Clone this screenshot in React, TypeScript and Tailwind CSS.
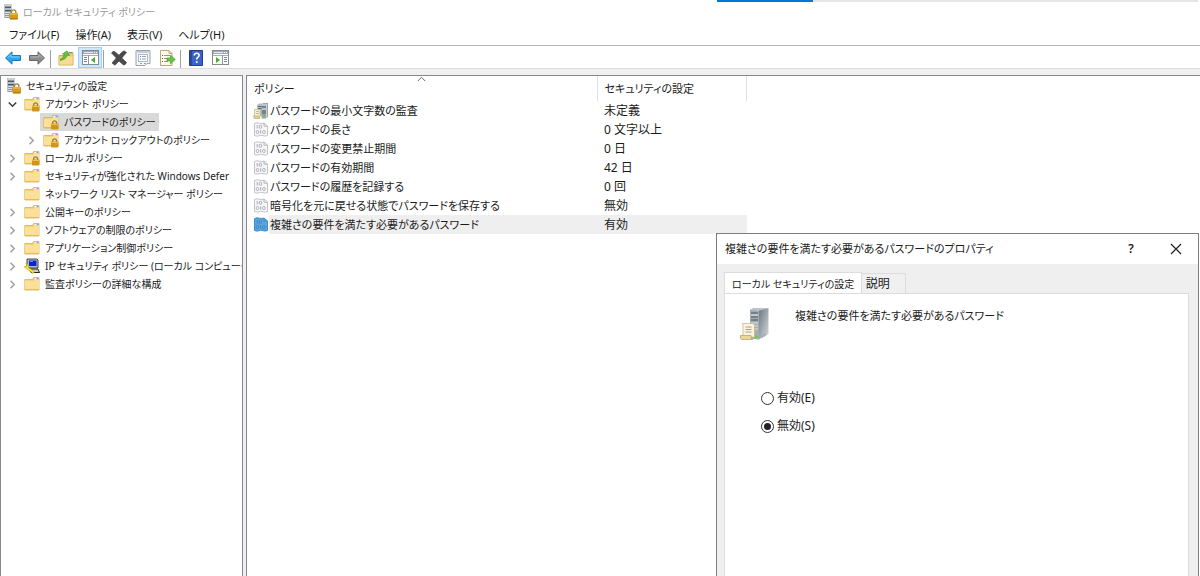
import { useState } from "react";
import type { ReactNode } from "react";

function ServerLockIcon() {
  return (
    <svg width="16" height="16" viewBox="0 0 16 16" className="shrink-0" aria-hidden="true">
      <path d="M1 0h7.500v14H1z" fill="#8d9aa3" />
      <path d="M1 0h7.500v2H1z" fill="#c9d1d6" />
      <path d="M1 0h1v14H1z" fill="#b9c3c9" />
      <path d="M2 3.500h6M2 6.500h6" stroke="#4c5a64" />
      <path d="M2 5h6M2 8.500h5M2 10.500h4M2 12.500h4" stroke="#d8dfe3" />
      <path d="M8.500 9.500V8a2.200 2.200 0 0 1 4.400 0v1.500" fill="none" stroke="#a08343" strokeWidth="1.300" />
      <rect x="6.500" y="9" width="8.500" height="6.500" rx="0.800" fill="#d79a1e" />
      <path d="M7 10h7.500" stroke="#f2c75b" />
      <path d="M7 14.800h7.500" stroke="#a86e0c" />
    </svg>
  );
}

function FolderIcon({ locked = false }: { locked?: boolean }) {
  return (
    <svg width="16" height="16" viewBox="0 0 16 16" className="shrink-0" aria-hidden="true">
      <path d="M.8 3.500h7.700l1-2h5.500v12.500H.8z" fill="#edc667" stroke="#dcb154" strokeWidth="0.800" />
      <path d="M10.500 2.700h4" stroke="#fff" strokeWidth="1.400" />
      <path d="M12.500 2.700h2" stroke="#5aa9dc" strokeWidth="1.400" />
      <path d="M1 4.500h8.500l1-1h4.500v10H1z" fill="#fbe09a" />
      <path d="M1 13.500h14" stroke="#dfb658" strokeWidth="0.800" />
      {locked && (
        <>
          <path d="M9.700 10V8.300a2 2 0 0 1 3.800 0V10" fill="none" stroke="#8f7643" strokeWidth="1.300" />
          <rect x="8" y="9.500" width="7.500" height="6" rx="0.800" fill="#d2951b" />
          <path d="M8.500 10.500h6.500" stroke="#efbf4f" />
        </>
      )}
    </svg>
  );
}

function IpSecurityIcon() {
  return (
    <svg width="16" height="16" viewBox="0 0 16 16" className="shrink-0" aria-hidden="true">
      <path d="M3 1h10l1 1v8H4L3 9z" fill="#b9bec4" stroke="#222" strokeWidth="0.800" />
      <path d="M5 2.500h7.500V8H5z" fill="#0a25c4" />
      <path d="M6 3.500h3" stroke="#5d8bff" />
      <path d="M5 11h9l1.500 3.500H7z" fill="#c8ccd0" stroke="#111" strokeWidth="0.900" />
      <path d="M1.800 5.500l2.600 1.300v2.700l6 4.200-1.200 1.700-6-4.300L.7 9.700V8l2 .8 .3-1.500z" fill="#ffe82c" stroke="#b19a00" strokeWidth="0.500" />
    </svg>
  );
}

function PolicyIcon({ selected = false }: { selected?: boolean }) {
  return (
    <svg width="14" height="15" viewBox="0 0 14 15" className="shrink-0" aria-hidden="true">
      <path
        d="M.5 1.500Q3 .3 5.500 1.200T10 1l3.500 3v9.500q-2 1-4.500.2t-5 .3q-2 .3-3.500-.5z"
        fill={selected ? "#5aa5dd" : "#f7f7f9"}
        stroke={selected ? "#3d8fce" : "#c2c2ca"}
      />
      <path d="M10 1v3.200h3.500" fill="none" stroke={selected ? "#3d8fce" : "#b4b4bd"} />
      <g fill="none" stroke={selected ? "#3c86c4" : "#a3a3b0"} strokeWidth="0.900">
        <path d="M3.200 3v3.500" />
        <rect x="5.200" y="3.300" width="2.400" height="3" rx="1" />
        <rect x="2.300" y="8.500" width="2.400" height="3" rx="1" />
        <path d="M6.700 8.200v3.500" />
        <rect x="8.700" y="8.500" width="2.400" height="3" rx="1" />
      </g>
    </svg>
  );
}

function AuditIcon() {
  return (
    <svg width="16" height="16" viewBox="0 0 16 16" className="shrink-0" aria-hidden="true">
      <path d="M4 2l2-1.500h4.500V13H4z" fill="#b8c0c4" />
      <path d="M5 3.500h4M5 5.500h4" stroke="#5c6972" />
      <path d="M8.500 1.500L10.500 0H15v14l-2 1.500H8.500z" fill="#9aa6ad" />
      <path d="M9 2h4.500M9 6h4.500" stroke="#dfe5e8" />
      <path d="M9 4h4.500M9 8h4.500M9 10h4.500" stroke="#53616a" />
      <path d="M13.500 1v14" stroke="#c9d0d4" />
      <circle cx="11.500" cy="13" r="1" fill="#62c92f" />
      <path d="M1.500 6.500h5.500v8H1.500z" fill="#faefd0" stroke="#c8b88b" strokeWidth="0.800" />
      <path d="M3 8.500h3M3 10.500h3" stroke="#b7aa90" strokeWidth="0.800" />
      <path d="M.5 13h5.500l.8 2.500H1z" fill="#e8cf90" stroke="#bba66c" strokeWidth="0.600" />
    </svg>
  );
}

function ServerScrollIcon() {
  return (
    <svg viewBox="0 0 32 36" className="h-9 w-8 shrink-0" aria-hidden="true">
      <defs>
        <linearGradient id="server-side" x1="0" x2="1" y1="0" y2="1">
          <stop offset="0" stopColor="#6d7880" />
          <stop offset="1" stopColor="#d5dadd" />
        </linearGradient>
      </defs>
      <path d="M11 3.500l3-1.500h15.500L20 4.500z" fill="#bcc4c9" />
      <path d="M11 3.500l9 1v29l-9-1z" fill="#a3adb4" />
      <path d="M20 4.500L29.500 2v26L20 33.500z" fill="url(#server-side)" />
      <path d="M12 7h7M12 11h7M12 14h7" stroke="#46545e" strokeWidth="1.200" />
      <path d="M12 9h7M12 17h7M12 20h7M12 23h7" stroke="#dce2e6" strokeWidth="1.200" />
      <circle cx="17.500" cy="30.500" r="1.500" fill="#62d62d" />
      <path d="M23 31l4-2.500" stroke="#9ba5ab" strokeDasharray="1 1" strokeWidth="2" />
      <path d="M3.500 17.500h10q2 0 2 2V31H4V20z" fill="#fbf3da" stroke="#c8b88b" strokeWidth="0.800" />
      <path d="M6.500 21h6M6.500 23.500h6M6.500 26h6" stroke="#a79f99" />
      <path d="M1.500 29.500h10.500v2q.5 2 2 2H2.500q-2-.5-1-4z" fill="#ecd69b" stroke="#bba66c" strokeWidth="0.800" />
    </svg>
  );
}

function ArrowIcon({ forward = false }: { forward?: boolean }) {
  return (
    <svg width="18" height="16" viewBox="0 0 18 16" aria-hidden="true">
      {forward ? (
        <>
          <path d="M16.500 8L10 1.800v3.700H1.500v5H10v3.700z" fill="#8c8c8c" stroke="#666" strokeLinejoin="round" />
          <path d="M2.500 7h8.500V4.500L14.500 8" fill="none" stroke="#b5b5b5" />
        </>
      ) : (
        <>
          <path d="M1.500 8L8 1.800v3.700h8.500v5H8v3.700z" fill="#2aa5ee" stroke="#1779bd" strokeLinejoin="round" />
          <path d="M15.500 7H7V4.500L3.500 8" fill="none" stroke="#83d2ff" />
        </>
      )}
    </svg>
  );
}

function FolderUpIcon() {
  return (
    <svg width="16" height="16" viewBox="0 0 16 16" aria-hidden="true">
      <path d="M1 5.500h6L9 3h6v12H1z" fill="#f0cb74" stroke="#d6ad55" />
      <path d="M1.500 14.500V7.500L8 6.500h6.500v8z" fill="#f8dc94" />
      <path d="M11 2.500h3.500" stroke="#4b91c4" />
      <path d="M2.500 9Q5 8.500 6.500 4.500L4.500 4 9 1l2.500 4.500-2-.5Q8 9.500 2.500 10.500z" fill="#63c53d" stroke="#3c9a24" strokeWidth="0.700" />
    </svg>
  );
}

function PaneIcon({ direction }: { direction: "left" | "right" }) {
  return (
    <svg width="17" height="15" viewBox="0 0 17 15" aria-hidden="true">
      <rect x=".5" y=".5" width="16" height="14" fill="#fff" stroke="#858b91" />
      <path d="M1 1h15v3H1z" fill="#a1a8ae" />
      <path d="M2 2.500h9" stroke="#e9edf0" />
      <path d="M12 2.500h1M14 2.500h1" stroke="#fff" />
      <path d="M1 5.500h15" stroke="#a9aeb2" />
      {direction === "left" ? (
        <>
          <path d="M6.500 5v10" stroke="#90979d" />
          <path d="M2 7.500h3M2 9.500h3M2 11.500h3" stroke="#698ba8" />
          <path d="M13 7v6L9 10z" fill="#48ac2a" />
        </>
      ) : (
        <>
          <path d="M10.500 5v10" stroke="#90979d" />
          <path d="M12 7.500h3M12 9.500h3M12 11.500h3" stroke="#698ba8" />
          <path d="M4 7v6l4-3z" fill="#48ac2a" />
        </>
      )}
    </svg>
  );
}

function DeleteIcon() {
  return (
    <svg width="16" height="16" viewBox="0 0 16 16" aria-hidden="true">
      <path d="M.5 3Q2 .8 3.500 1.500L8 5.200Q10.500 2 13 .8l2.500 1.700L10.800 8l4.700 4.500q-1 2.500-3 2.500L8 11l-4 4.200L1 13l4.300-5z" fill="#4b4b4b" stroke="#333" strokeWidth="0.600" />
    </svg>
  );
}

function PropertiesIcon() {
  return (
    <svg width="16" height="16" viewBox="0 0 16 16" aria-hidden="true">
      <path d="M1 .5h14v13h-3l-2 2H1z" fill="#f5f7fa" stroke="#9aa2ab" />
      <path d="M2 2h12" stroke="#b3bfca" strokeWidth="1.500" />
      <rect x="3.500" y="4.500" width="9" height="7" fill="#fff" stroke="#aeb8c2" />
      <path d="M5 6.500h1M5 9h1" stroke="#3a91d1" />
      <path d="M7 6.500h4M7 9h4" stroke="#98a3ad" />
      <path d="M5 13.500h2M9 13.500h2" stroke="#51b8e8" />
    </svg>
  );
}

function ExportIcon() {
  return (
    <svg width="17" height="16" viewBox="0 0 17 16" aria-hidden="true">
      <path d="M1.500 .5H10l3 3v12H1.500z" fill="#fffbe9" stroke="#b9a878" />
      <path d="M10 .5v3h3" fill="none" stroke="#b9a878" />
      <path d="M3 5.500h1M3 8.500h1M3 11.500h1" stroke="#555" />
      <path d="M5 5.500h6M5 8.500h4M5 11.500h4" stroke="#98909c" />
      <path d="M8 8h3.500V5.300L16.300 9.500l-4.800 4.200V11H8z" fill="#69c443" stroke="#48a027" strokeWidth="0.700" />
    </svg>
  );
}

function HelpIcon() {
  return (
    <svg width="14" height="16" viewBox="0 0 14 16" aria-hidden="true">
      <path d="M.5.5h13v15H.5z" fill="#3b63c6" stroke="#213c91" />
      <path d="M1 1h2v14H1z" fill="#2a489f" />
      <path d="M5.300 5.500Q5.300 3.300 7.700 3.300t2.400 2q0 1.300-1.300 2.100T7.700 9.500" fill="none" stroke="#fff" strokeWidth="1.600" />
      <path d="M6.900 11.200h1.700v1.700H6.900z" fill="#fff" />
    </svg>
  );
}

function Chevron({ open }: { open?: boolean }) {
  return (
    <svg width="9" height="9" viewBox="0 0 9 9" className="shrink-0" aria-hidden="true">
      {open === true && <path d="M.8 2.500l3.700 3.700 3.700-3.700" fill="none" stroke="#404040" strokeWidth="1.600" />}
      {open === false && <path d="M2.500 .8l3.700 3.700-3.700 3.700" fill="none" stroke="#a0a0a0" strokeWidth="1.500" />}
    </svg>
  );
}

type Node = { label: string; icon: ReactNode; open?: boolean; selected?: boolean; children?: Node[] };

const tree: Node[] = [
  {
    label: "アカウント ポリシー",
    icon: <FolderIcon locked />,
    open: true,
    children: [
      { label: "パスワードのポリシー", icon: <FolderIcon locked />, selected: true },
      { label: "アカウント ロックアウトのポリシー", icon: <FolderIcon locked />, open: false },
    ],
  },
  { label: "ローカル ポリシー", icon: <FolderIcon locked />, open: false },
  { label: "セキュリティが強化された Windows Defer", icon: <FolderIcon />, open: false },
  { label: "ネットワーク リスト マネージャー ポリシー", icon: <FolderIcon /> },
  { label: "公開キーのポリシー", icon: <FolderIcon />, open: false },
  { label: "ソフトウェアの制限のポリシー", icon: <FolderIcon />, open: false },
  { label: "アプリケーション制御ポリシー", icon: <FolderIcon />, open: false },
  { label: "IP セキュリティ ポリシー (ローカル コンピュータ", icon: <IpSecurityIcon />, open: false },
  { label: "監査ポリシーの詳細な構成", icon: <FolderIcon />, open: false },
];

function TreeItem({ node }: { node: Node }) {
  return (
    <li>
      <button type="button" className="flex h-[18px] items-center gap-1 whitespace-nowrap pl-[7px]">
        <Chevron open={node.open} />
        <span className={`flex h-[18px] items-center gap-[5px] px-[3px] ${node.selected ? "bg-[#d9d9d9]" : ""}`}>
          {node.icon}
          {node.label}
        </span>
      </button>
      {node.children && (
        <ul className="pl-[19px]">
          {node.children.map((child) => (
            <TreeItem key={child.label} node={child} />
          ))}
        </ul>
      )}
    </li>
  );
}

const policies = [
  { name: "パスワードの最小文字数の監査", value: "未定義", audit: true },
  { name: "パスワードの長さ", value: "0 文字以上" },
  { name: "パスワードの変更禁止期間", value: "0 日" },
  { name: "パスワードの有効期間", value: "42 日" },
  { name: "パスワードの履歴を記録する", value: "0 回" },
  { name: "暗号化を元に戻せる状態でパスワードを保存する", value: "無効" },
  { name: "複雑さの要件を満たす必要があるパスワード", value: "有効", selected: true },
];

function PolicyTable() {
  return (
    <table className="w-[500px] table-fixed border-collapse text-left">
      <thead>
        <tr className="h-[25px]">
          <th className="relative w-[350px] border-r border-[#e2e2e2] p-0 pl-[7px] font-normal">
            ポリシー
            <svg width="9" height="6" viewBox="0 0 9 6" className="absolute inset-x-0 top-0 mx-auto" aria-hidden="true">
              <path d="M.8 5l3.700-3.700L8.200 5" fill="none" stroke="#666" />
            </svg>
          </th>
          <th className="border-r border-[#e2e2e2] p-0 pl-[7px] font-normal">セキュリティの設定</th>
        </tr>
      </thead>
      <tbody>
        {policies.map((policy) => (
          <tr key={policy.name} className="h-[19px]">
            <td className="p-0">
              <div className="flex h-[19px] items-center whitespace-nowrap">
                <span className="flex w-[22px] shrink-0 justify-center pl-[5px]">
                  {policy.audit ? <AuditIcon /> : <PolicyIcon selected={policy.selected} />}
                </span>
                <span className={`flex h-[19px] flex-1 items-center pl-px ${policy.selected ? "bg-[#efefef]" : ""}`}>
                  {policy.name}
                </span>
              </div>
            </td>
            <td className={`p-0 pl-[7px] text-xs ${policy.selected ? "bg-[#efefef]" : ""}`}>{policy.value}</td>
          </tr>
        ))}
      </tbody>
    </table>
  );
}

function ToolButton({ label, active, children }: { label: string; active?: boolean; children: ReactNode }) {
  return (
    <button
      type="button"
      aria-label={label}
      className={`flex h-[21px] w-6 items-center justify-center border ${active ? "border-[#99d1ff] bg-[#cce8ff]" : "border-transparent"}`}
    >
      {children}
    </button>
  );
}

function Separator() {
  return <span className="ml-px mr-[3px] h-[18px] w-px bg-[#a0a0a0]" />;
}

function PropertiesDialog() {
  const [choice, setChoice] = useState("disabled");
  const options = [
    { id: "enabled", label: "有効(E)" },
    { id: "disabled", label: "無効(S)" },
  ];
  return (
    <section
      role="dialog"
      aria-labelledby="dialog-title"
      className="absolute bottom-0 right-px top-[233px] flex w-[483px] flex-col border-x border-t border-[#7d7d7d] bg-[#efefef]"
    >
      <header className="flex h-[30px] shrink-0 items-center bg-white pl-2 pr-4">
        <h2 id="dialog-title" className="flex-1">複雑さの要件を満たす必要があるパスワードのプロパティ</h2>
        <button type="button" aria-label="ヘルプ" className="mr-[33px] w-3 text-center text-xs font-semibold">?</button>
        <button type="button" aria-label="閉じる">
          <svg width="12" height="12" viewBox="0 0 12 12" aria-hidden="true">
            <path d="M1 1l10 10M11 1L1 11" stroke="#222" strokeWidth="1.200" />
          </svg>
        </button>
      </header>
      <div className="flex min-h-0 flex-1 flex-col pl-[7px] pr-[9px] pt-2">
        <div role="tablist" className="flex items-end">
          <button type="button" role="tab" aria-selected="true" className="-mb-px h-[22px] border-x border-t border-[#dcdcdc] bg-white px-[7px] text-[10px]">
            ローカル セキュリティの設定
          </button>
          <button type="button" role="tab" aria-selected="false" className="h-5 w-11 border-r border-t border-[#dcdcdc] bg-[#f0f0f0] pr-3 text-xs leading-[18px]">
            説明
          </button>
        </div>
        <div role="tabpanel" className="flex-1 border-x border-t border-[#dcdcdc] bg-white">
          <div className="flex gap-6 pl-[14px] pt-3">
            <ServerScrollIcon />
            <p className="h-5 leading-5">複雑さの要件を満たす必要があるパスワード</p>
          </div>
          <fieldset className="flex flex-col items-start gap-2 pl-9 pt-[46px] text-xs">
            {options.map((option) => (
              <label key={option.id} className="flex h-5 items-center gap-[3px]">
                <input
                  type="radio"
                  name="requirement"
                  checked={choice === option.id}
                  onChange={() => setChoice(option.id)}
                  className="h-[13px] w-[13px] appearance-none rounded-full border border-[#333] bg-white bg-clip-content p-[2px] checked:bg-[#222]"
                />
                {option.label}
              </label>
            ))}
          </fieldset>
        </div>
      </div>
    </section>
  );
}

export default function App() {
  return (
    <div
      lang="ja"
      className="relative flex h-screen flex-col overflow-hidden bg-white font-['Noto_Sans','Noto_Sans_CJK_JP',sans-serif] text-[11px] leading-[18px] text-[#1a1a1a] [font-feature-settings:'palt']"
    >
      <div className="absolute right-[2px] top-0 flex h-[2px] w-[481px] bg-[#e5e5e5]">
        <span className="w-1/5 bg-[#0078d7]" />
      </div>
      <header className="flex h-6 shrink-0 items-center gap-1 pl-[3px] text-[10px] text-[#999]">
        <ServerLockIcon />
        <h1>ローカル セキュリティ ポリシー</h1>
      </header>
      <nav className="flex h-[21px] shrink-0 items-center gap-4 pl-[9px]">
        <button type="button">ファイル(F)</button>
        <button type="button">操作(A)</button>
        <button type="button">表示(V)</button>
        <button type="button">ヘルプ(H)</button>
      </nav>
      <div role="toolbar" className="flex h-6 shrink-0 items-end border-y border-t-[#b4b4bb] border-b-[#dcdcdc] pl-px">
        <ToolButton label="戻る"><ArrowIcon /></ToolButton>
        <ToolButton label="進む"><ArrowIcon forward /></ToolButton>
        <Separator />
        <ToolButton label="上へ"><FolderUpIcon /></ToolButton>
        <ToolButton label="ツリーの表示" active><PaneIcon direction="left" /></ToolButton>
        <Separator />
        <ToolButton label="削除"><DeleteIcon /></ToolButton>
        <ToolButton label="プロパティ"><PropertiesIcon /></ToolButton>
        <ToolButton label="一覧のエクスポート"><ExportIcon /></ToolButton>
        <Separator />
        <ToolButton label="ヘルプ"><HelpIcon /></ToolButton>
        <ToolButton label="操作ウィンドウの表示"><PaneIcon direction="right" /></ToolButton>
      </div>
      <main className="flex min-h-0 flex-1 gap-[3px] bg-[#f0f0f0] pt-[6px]">
        <aside className="w-[243px] shrink-0 overflow-hidden border-x border-t border-[#828790] bg-white pt-px text-[10px]">
          <button type="button" className="flex h-[18px] items-center gap-1 pl-[5px]">
            <ServerLockIcon />
            セキュリティの設定
          </button>
          <ul>
            {tree.map((node) => (
              <TreeItem key={node.label} node={node} />
            ))}
          </ul>
        </aside>
        <section className="min-w-0 flex-1 border-l border-t border-[#828790] bg-white">
          <PolicyTable />
        </section>
      </main>
      <PropertiesDialog />
    </div>
  );
}
